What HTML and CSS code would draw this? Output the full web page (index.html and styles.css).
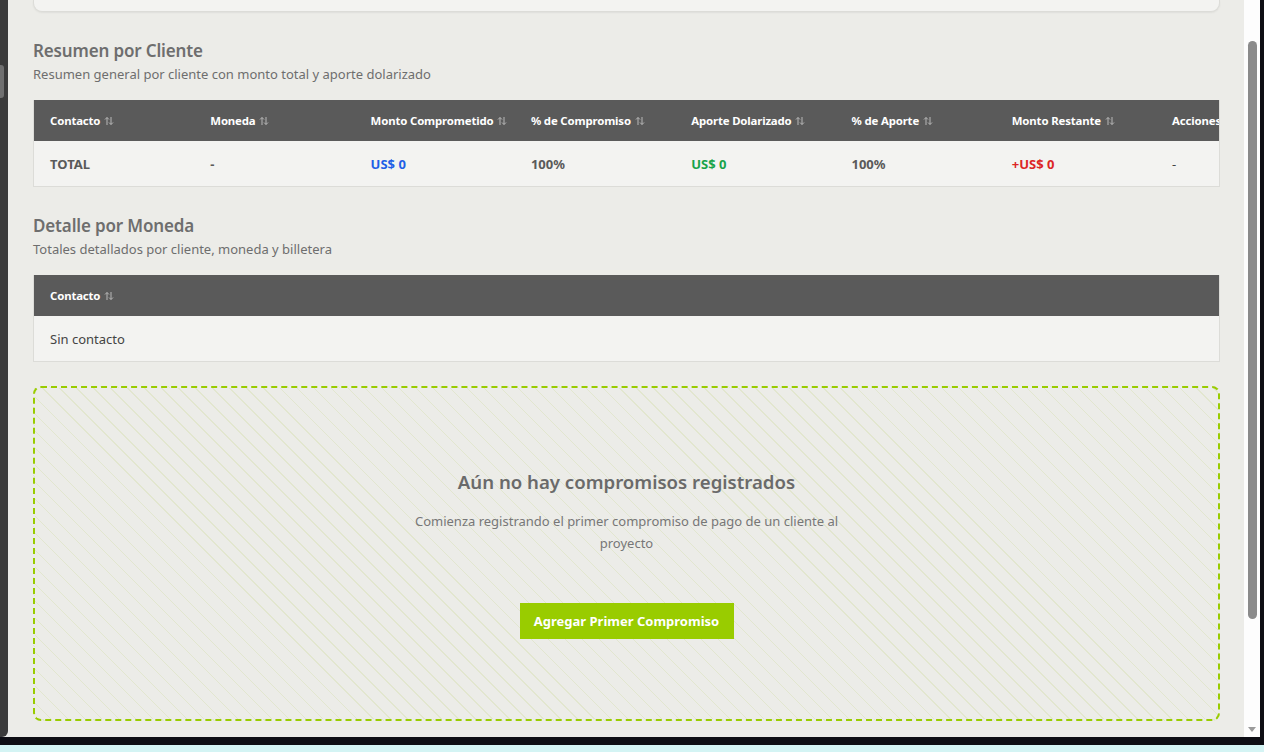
FILE: index.html
```html
<!DOCTYPE html>
<html lang="es">
<head>
<meta charset="utf-8">
<title>Compromisos</title>
<link rel="stylesheet" href="styles.css">
</head>
<body>
<div class="window">
  <div class="row">
    <div class="side"><div class="side-handle"></div></div>
    <main class="main">
      <div class="card-tail"></div>

      <section class="section">
        <h2 class="sec-title">Resumen por Cliente</h2>
        <p class="sec-sub">Resumen general por cliente con monto total y aporte dolarizado</p>
        <div class="table-wrap">
          <table class="tbl tbl-wide">
            <thead>
              <tr>
                <th>Contacto <span class="sort"><svg viewBox="0 0 10 10" width="10" height="10"><path d="M3 9V1.5M1 3.5L3 1.5L5 3.5M7 1V8.5M5 6.5L7 8.5L9 6.5" fill="none" stroke="currentColor" stroke-width="1"/></svg></span></th>
                <th>Moneda <span class="sort"><svg viewBox="0 0 10 10" width="10" height="10"><path d="M3 9V1.5M1 3.5L3 1.5L5 3.5M7 1V8.5M5 6.5L7 8.5L9 6.5" fill="none" stroke="currentColor" stroke-width="1"/></svg></span></th>
                <th>Monto Comprometido <span class="sort"><svg viewBox="0 0 10 10" width="10" height="10"><path d="M3 9V1.5M1 3.5L3 1.5L5 3.5M7 1V8.5M5 6.5L7 8.5L9 6.5" fill="none" stroke="currentColor" stroke-width="1"/></svg></span></th>
                <th>% de Compromiso <span class="sort"><svg viewBox="0 0 10 10" width="10" height="10"><path d="M3 9V1.5M1 3.5L3 1.5L5 3.5M7 1V8.5M5 6.5L7 8.5L9 6.5" fill="none" stroke="currentColor" stroke-width="1"/></svg></span></th>
                <th>Aporte Dolarizado <span class="sort"><svg viewBox="0 0 10 10" width="10" height="10"><path d="M3 9V1.5M1 3.5L3 1.5L5 3.5M7 1V8.5M5 6.5L7 8.5L9 6.5" fill="none" stroke="currentColor" stroke-width="1"/></svg></span></th>
                <th>% de Aporte <span class="sort"><svg viewBox="0 0 10 10" width="10" height="10"><path d="M3 9V1.5M1 3.5L3 1.5L5 3.5M7 1V8.5M5 6.5L7 8.5L9 6.5" fill="none" stroke="currentColor" stroke-width="1"/></svg></span></th>
                <th>Monto Restante <span class="sort"><svg viewBox="0 0 10 10" width="10" height="10"><path d="M3 9V1.5M1 3.5L3 1.5L5 3.5M7 1V8.5M5 6.5L7 8.5L9 6.5" fill="none" stroke="currentColor" stroke-width="1"/></svg></span></th>
                <th>Acciones</th>
              </tr>
            </thead>
            <tbody>
              <tr>
                <td class="b">TOTAL</td>
                <td class="b">-</td>
                <td class="b blue">US$ 0</td>
                <td class="b">100%</td>
                <td class="b green">US$ 0</td>
                <td class="b">100%</td>
                <td class="b red">+US$ 0</td>
                <td>-</td>
              </tr>
            </tbody>
          </table>
        </div>
      </section>

      <section class="section">
        <h2 class="sec-title">Detalle por Moneda</h2>
        <p class="sec-sub">Totales detallados por cliente, moneda y billetera</p>
        <div class="table-wrap">
          <table class="tbl tbl-full">
            <thead>
              <tr>
                <th>Contacto <span class="sort"><svg viewBox="0 0 10 10" width="10" height="10"><path d="M3 9V1.5M1 3.5L3 1.5L5 3.5M7 1V8.5M5 6.5L7 8.5L9 6.5" fill="none" stroke="currentColor" stroke-width="1"/></svg></span></th>
              </tr>
            </thead>
            <tbody>
              <tr><td>Sin contacto</td></tr>
            </tbody>
          </table>
        </div>
      </section>

      <section class="empty">
        <h3 class="empty-title">Aún no hay compromisos registrados</h3>
        <p class="empty-text">Comienza registrando el primer compromiso de pago de un cliente al proyecto</p>
        <button class="btn" type="button">Agregar Primer Compromiso</button>
      </section>
    </main>
    <div class="scrollbar">
      <div class="sb-track"><div class="sb-thumb"></div></div>
      <div class="sb-arrow"></div>
    </div>
    <div class="edge"></div>
  </div>
  <div class="bottom-dark"></div>
  <div class="bottom-cyan"></div>
</div>
</body>
</html>
```

FILE: styles.css
```css
* { box-sizing: border-box; }
html, body { margin: 0; padding: 0; }
body {
  width: 1264px;
  height: 752px;
  overflow: hidden;
  font-family: "Segoe UI", "Noto Sans", "Open Sans", sans-serif;
  background: #d4f4f4;
}
.window { display: flex; flex-direction: column; height: 752px; }
.row { display: flex; height: 737px; background: #ecece8; }
.side {
  width: 8px;
  background: #3b3b3b;
  border-bottom-right-radius: 6px;
  position: relative;
  flex: none;
}
.side-handle {
  position: absolute;
  left: 0; top: 65px;
  width: 4px; height: 33px;
  background: #707070;
  border-radius: 0 3px 3px 0;
}
.main {
  flex: 1;
  min-width: 0;
  overflow: hidden;
  padding: 0 24px 0 25px;
}
.card-tail {
  height: 12px;
  background: #f3f3f1;
  border: 1px solid #dcdcd8;
  border-top: none;
  border-radius: 0 0 9px 9px;
  box-shadow: 0 1px 2px rgba(0,0,0,0.06);
}
.section { margin-top: 27px; }
.sec-title {
  margin: 0;
  font-size: 17px;
  letter-spacing: -0.15px;
  font-weight: 600;
  color: #6e6e6e;
  line-height: 24px;
}
.sec-sub {
  margin: 2px 0 0;
  font-size: 13px;
  color: #6e6e6e;
  line-height: 18px;
}
.table-wrap {
  margin-top: 17px;
  overflow: hidden;
  border: 1px solid #dcdcd8;
  border-top: none;
}
.tbl {
  border-collapse: collapse;
  table-layout: fixed;
}
.tbl-wide { width: 1282.4px; }
.tbl-wide th, .tbl-wide td { width: 160.3px; }
.tbl-full { width: 100%; }
.tbl th {
  background: #5a5a5a;
  color: #ffffff;
  font-size: 11.4px;
  letter-spacing: -0.15px;
  font-weight: 700;
  text-align: left;
  height: 41px;
  padding: 0 0 0 16px;
  white-space: nowrap;
}
.sort { color: #b8b8b8; display: inline-block; vertical-align: -1px; margin-left: 1px; }
.sort svg { display: block; }
.tbl td {
  background: #f3f3f1;
  height: 45px;
  padding: 0 0 0 16px;
  font-size: 13px;
  color: #444;
  white-space: nowrap;
}
.tbl td.b { font-weight: 700; color: #5a5a5a; }
.tbl td.blue { color: #1f5fe6; }
.tbl td.green { color: #17a34a; }
.tbl td.red { color: #dc2626; }

.empty {
  margin-top: 24px;
  height: 335px;
  border: 2px dashed #99cc00;
  border-radius: 8px;
  background-color: #ecece8;
  background-image: repeating-linear-gradient(45deg, transparent 0, transparent 11px, #e2e6cf 11px, #e2e6cf 12px);
  display: flex;
  flex-direction: column;
  align-items: center;
  justify-content: center;
  text-align: center;
  padding-top: 1px;
}
.empty-title {
  margin: 0;
  font-size: 18.6px;
  font-weight: 600;
  color: #6a6a6a;
  line-height: 26px;
}
.empty-text {
  margin: 15px 0 0;
  max-width: 450px;
  font-size: 13px;
  line-height: 22px;
  color: #777;
}
.btn {
  margin-top: 49px;
  width: 214px;
  height: 36px;
  border: none;
  background: #99cc00;
  color: #fff;
  font-family: inherit;
  font-size: 13px;
  font-weight: 700;
  padding: 0;
}
.scrollbar {
  width: 16px;
  flex: none;
  background: #fdfdfd;
  display: flex;
  flex-direction: column;
  align-items: center;
  padding-top: 41px;
}
.sb-track { flex: 1; width: 100%; display: flex; justify-content: center; }
.sb-thumb {
  width: 9px;
  height: 578px;
  background: #8b8b8b;
  border-radius: 5px;
}
.sb-arrow {
  width: 0; height: 0;
  border-left: 4px solid transparent;
  border-right: 4px solid transparent;
  border-top: 5px solid #9a9a9a;
  margin-bottom: 5px;
}
.edge { width: 4px; flex: none; background: #0e0e14; }
.bottom-dark { height: 8px; background: #0e0e14; }
.bottom-cyan { flex: 1; background: #d4f4f4; }
```
